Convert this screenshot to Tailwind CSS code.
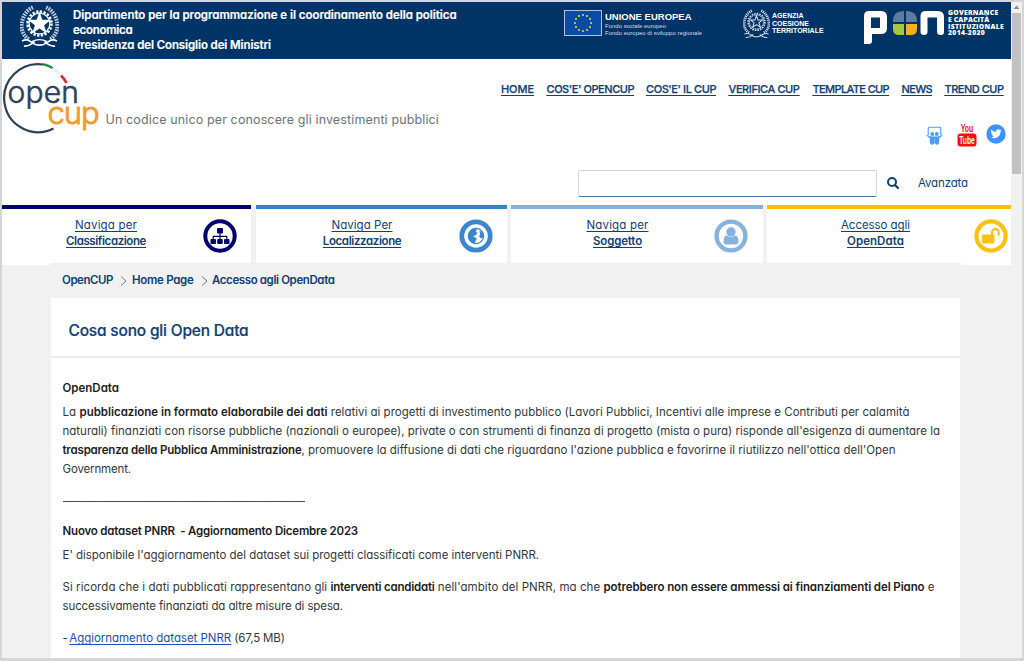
<!DOCTYPE html>
<html lang="it">
<head>
<meta charset="utf-8">
<title>OpenCUP - Accesso agli OpenData</title>
<script src="https://cdn.jsdelivr.net/npm/@tailwindcss/browser@4"></script>
</head>
<body class="flex h-[661px] w-[1024px] overflow-hidden border-t-2 border-r-2 border-b-3 border-l-2 border-[#d5d5d5] bg-white font-['Inter','Open_Sans',sans-serif] text-[11.500px] whitespace-nowrap text-[#0f3f75] [font-feature-settings:'cv11']">

<svg class="absolute size-0" aria-hidden="true">
  <defs>
    <symbol id="emblem" viewBox="0 0 40 44">
      <g fill="none" stroke="currentColor">
        <circle cx="20" cy="19" r="12.3" stroke-width="2.6" stroke-dasharray="2.4 1.46"/>
        <circle cx="20" cy="19" r="10.6" stroke-width="1.1"/>
        <path d="M9 35C2 31 0 22 3 14C5 8 9 4 14 2" stroke-width="4.2" stroke-dasharray="1.7 1" opacity=".75"/>
        <path d="M31 35C38 31 40 22 37 14C35 8 31 4 26 2" stroke-width="4.2" stroke-dasharray="1.7 1" opacity=".75"/>
        <path d="M2 37C7 34 10 37 13 39C18 42 22 42 27 39C30 37 33 34 38 37M4 42C9 43 12 40 15 37.5M36 42C31 43 28 40 25 37.5" stroke-width="1.6"/>
        <path d="M12 37.500Q20 33.500 28 37.500" stroke-width="1.4"/>
      </g>
      <path fill="currentColor" d="M20 6.500L22.900 15.200L32 15.200L24.700 20.600L27.500 29.300L20 24L12.500 29.300L15.300 20.600L8 15.200L17.100 15.200Z"/>
    </symbol>
    <symbol id="emblem-line" viewBox="0 0 40 44">
      <g fill="none" stroke="currentColor">
        <circle cx="20" cy="19" r="12.300" stroke-width="2.400" stroke-dasharray="2.400 1.460"/>
        <circle cx="20" cy="19" r="10.500" stroke-width="1"/>
        <path d="M9 35C2 31 0 22 3 14C5 8 9 4 14 2" stroke-width="4" stroke-dasharray="1.700 1.200"/>
        <path d="M31 35C38 31 40 22 37 14C35 8 31 4 26 2" stroke-width="4" stroke-dasharray="1.700 1.200"/>
        <path d="M2 37C7 34 10 37 13 39C18 42 22 42 27 39C30 37 33 34 38 37M4 42C9 43 12 40 15 37.500M36 42C31 43 28 40 25 37.500" stroke-width="1.500"/>
        <path d="M20 9.500L22.200 16L29 16L23.600 20.100L25.700 26.800L20 22.800L14.300 26.800L16.400 20.100L11 16L17.800 16Z" stroke-width="1.500"/>
      </g>
    </symbol>
  </defs>
</svg>

<div class="flex w-[1009px] flex-col">
  <header class="flex h-[57px] shrink-0 bg-[#003366] pl-[18px] text-white">
    <svg class="mt-[3px] h-[43px] w-[39px]"><use href="#emblem"/></svg>
    <div class="mt-[6px] ml-[14px] w-[490px] text-[11.500px] leading-[15px] font-semibold [-webkit-text-stroke:0.200px]">
      <p class="tracking-[-0.030px]">Dipartimento per la programmazione e il coordinamento della politica</p>
      <p class="tracking-[-0.260px]">economica</p>
      <p class="tracking-[-0.100px]">Presidenza del Consiglio dei Ministri</p>
    </div>
    <div class="mt-[8px] ml-[1px] flex w-[179px] font-['Liberation_Sans',sans-serif]">
      <svg class="h-[26px] w-[38px]" viewBox="0 0 38 26">
        <rect x=".5" y=".5" width="37" height="25" fill="#0a4ba3" stroke="#a9c3e6"/>
        <g fill="#e5e04a">
          <circle cx="19" cy="5" r="1"/><circle cx="23" cy="6.100" r="1"/><circle cx="26" cy="9" r="1"/><circle cx="27" cy="13" r="1"/><circle cx="26" cy="17" r="1"/><circle cx="23" cy="19.900" r="1"/><circle cx="19" cy="21" r="1"/><circle cx="15" cy="19.900" r="1"/><circle cx="12" cy="17" r="1"/><circle cx="11" cy="13" r="1"/><circle cx="12" cy="9" r="1"/><circle cx="15" cy="6.100" r="1"/>
        </g>
      </svg>
      <div class="ml-[3px]">
        <p class="mt-[1px] text-[9.500px] leading-[12px] font-bold">UNIONE EUROPEA</p>
        <p class="text-[6px] leading-[7px] text-[#d5deea]">Fondo sociale europeo</p>
        <p class="text-[6px] leading-[7px] text-[#d5deea]">Fondo europeo di sviluppo regionale</p>
      </div>
    </div>
    <svg class="mt-[7px] h-[30px] w-[27px] text-[#d5deea]"><use href="#emblem-line"/></svg>
    <div class="mt-[10px] ml-[2px] w-[91px] font-['Liberation_Sans',sans-serif] text-[7px] leading-[7.500px] font-bold">
      <p>AGENZIA</p><p>COESIONE</p><p>TERRITORIALE</p>
    </div>
    <svg class="mt-[8px] h-[35px] w-[83px]" viewBox="0 0 83 35">
      <path d="M1 34V6Q1 1 6 1H18Q24 1 24 7V18Q24 24 18 24H9V31Q9 34 6 34ZM8 7.500V18H17V7.500Z" fill="#fff" fill-rule="evenodd"/>
      <path d="M30 11Q30 1 40 1H41V12H30Z" fill="#5b7c9f"/>
      <path d="M43 1H44Q54 1 54 11V12H43Z" fill="#5b7c9f"/>
      <path d="M30 14H41V25H36Q30 25 30 19Z" fill="#a3c93a"/>
      <path d="M43 14H54V19Q54 25 48 25H43Z" fill="#f9b01e"/>
      <path d="M57.500 22V6Q57.500 1 62.500 1H75Q81 1 81 7V22Q81 25 78 25Q74 25 74 22V7.500H64.500V22Q64.500 25 61 25Q57.500 25 57.500 22Z" fill="#fff"/>
    </svg>
    <div class="mt-[8px] ml-[2px] font-['Open_Sans',sans-serif] text-[6.800px] leading-[6.800px] font-extrabold">
      <p class="tracking-[0.250px]">GOVERNANCE</p><p class="tracking-[0.150px]">E CAPACITÀ</p><p class="tracking-[0.300px]">ISTITUZIONALE</p><p class="tracking-[0.350px]">2014-2020</p>
    </div>
  </header>

  <section class="flex h-[146px] shrink-0 justify-between">
    <div class="flex">
      <svg class="h-[80px] w-[100px]" viewBox="2 59 100 80">
        <g fill="none" stroke-width="2.200">
          <path d="M43 64.500A34 34 0 1 0 53.500 128.500" stroke="#2d405a"/>
          <path d="M43 64.300Q48 65.300 52.500 68" stroke="#17924a" stroke-width="2.600"/>
          <path d="M53 68.500Q57.500 71 60.500 75" stroke="#ececec"/>
          <path d="M61 75.500Q64.500 79 66.500 83" stroke="#dc2430" stroke-width="2.600"/>
        </g>
        <text x="7.500" y="103" fill="#2d405a" stroke="#2d405a" stroke-width=".6" class="text-[30px] font-light tracking-[0.200px]">open</text>
        <text x="47.500" y="124" fill="#f49a26" stroke="#f49a26" stroke-width=".9" class="text-[31px] font-light tracking-[-1.100px]">cup</text>
      </svg>
      <p class="mt-[52px] ml-[3.500px] text-[12.500px] leading-[18px] tracking-[0.127px] text-[#6a737d]">Un codice unico per conoscere gli investimenti pubblici</p>
    </div>
    <div class="flex w-[510px] flex-col">
      <nav class="mt-[21px] flex h-[18px] text-[11px] leading-[18px] font-medium underline underline-offset-2 [-webkit-text-stroke:0.250px]">
        <a class="w-[45.500px] tracking-[-0.070px]">HOME</a>
        <a class="w-[99.500px] tracking-[-0.440px]">COS'E' OPENCUP</a>
        <a class="w-[82.500px] tracking-[-0.420px]">COS'E' IL CUP</a>
        <a class="w-[84px] tracking-[-0.410px]">VERIFICA CUP</a>
        <a class="w-[89px] tracking-[-0.620px]">TEMPLATE CUP</a>
        <a class="w-[43px] tracking-[-0.650px]">NEWS</a>
        <a class="tracking-[-0.490px]">TREND CUP</a>
      </nav>
      <div class="mt-[25px] flex h-[24px] pl-[425px]">
        <svg class="mt-[3px] h-[20px] w-[17px]" viewBox="0 0 17 20">
          <path d="M2.200 9V2.500Q2.200 1.200 3.500 1.200H13.500Q14.800 1.200 14.800 2.500V9" fill="none" stroke="#4a9cf5" stroke-width="1.100"/>
          <path d="M.5 9Q2 11.500 4 11.800V16Q4 18.500 6.200 18.500Q8.200 18.500 8.200 16.500V13H8.800V16.500Q8.800 18.500 10.800 18.500Q13 18.500 13 16V11.800Q15 11.500 16.500 9Q14 10.500 11 10.700H6Q3 10.500 .5 9Z" fill="#4a9cf5" stroke="#4a9cf5" stroke-width=".5"/>
          <circle cx="6.300" cy="8" r="1.900" fill="#4a9cf5"/><circle cx="10.800" cy="8" r="1.900" fill="#4a9cf5"/>
        </svg>
        <svg class="ml-[14px] h-[24px] w-[20px]" viewBox="0 0 20 24">
          <rect x=".5" y="10.500" width="19" height="13" rx="3" fill="#fb0d0d"/>
          <text x="10" y="9" fill="#fb0d0d" text-anchor="middle" textLength="12.500" lengthAdjust="spacingAndGlyphs" class="font-['Liberation_Sans',sans-serif] text-[11.500px] font-bold">You</text>
          <text x="10" y="21" fill="#fff" text-anchor="middle" textLength="15.500" lengthAdjust="spacingAndGlyphs" class="font-['Liberation_Sans',sans-serif] text-[11px] font-bold">Tube</text>
        </svg>
        <svg class="mt-[1px] ml-[9px] size-[20px]" viewBox="0 0 20 20">
          <circle cx="10" cy="10" r="9.700" fill="#3b94fa"/>
          <path fill="#fff" d="M15.600 6.300a4.500 4.500 0 0 1-1.300.4 2.200 2.200 0 0 0 1-1.300 4.500 4.500 0 0 1-1.400.5 2.300 2.300 0 0 0-3.900 2.100A6.500 6.500 0 0 1 5.300 5.600a2.300 2.300 0 0 0 .7 3 2.200 2.200 0 0 1-1-.3 2.300 2.300 0 0 0 1.800 2.300 2.300 2.300 0 0 1-1 0 2.300 2.300 0 0 0 2.100 1.600 4.600 4.600 0 0 1-3.400.9 6.500 6.500 0 0 0 10-5.700 4.600 4.600 0 0 0 1.100-1.100z"/>
        </svg>
      </div>
      <div class="mt-[23px] flex h-[27px] items-center pl-[77px]">
        <input class="h-[27px] w-[299px] rounded-[2px] border border-b-[1.500px] border-[#d3d7dc] border-b-[#44739f] bg-white" aria-label="Cerca">
        <svg class="-mt-[2px] ml-[9.500px] size-[12px]" viewBox="0 0 12 12"><circle cx="5" cy="5" r="4" fill="none" stroke="#0f3f75" stroke-width="2"/><path d="M8 8L11 11" stroke="#0f3f75" stroke-width="2.200" stroke-linecap="round"/></svg>
        <a class="mt-[1px] ml-[19.500px] tracking-[-0.145px]">Avanzata</a>
      </div>
    </div>
  </section>

  <main class="flex flex-1 flex-col bg-[#f1f1f1]">
    <nav class="flex h-[58px] shrink-0 gap-[4.500px] text-center leading-[16px]">
      <a class="flex w-[249px] border-t-4 border-[#000070] bg-white">
        <span class="mt-[8px] w-[208px] underline underline-offset-2"><span class="tracking-[0.164px]">Naviga per</span><br><b class="font-semibold tracking-[-0.406px]">Classificazione</b></span>
        <svg class="mt-[10px] -ml-[7px] size-[34px]" viewBox="0 0 34 34">
          <circle cx="17" cy="17" r="14.700" fill="none" stroke="#000070" stroke-width="4"/>
          <g fill="#000070"><rect x="14" y="9" width="6" height="5.500" rx="1"/><rect x="7.500" y="20" width="5.500" height="5" rx="1"/><rect x="14.200" y="20" width="5.500" height="5" rx="1"/><rect x="21" y="20" width="5.500" height="5" rx="1"/></g>
          <path d="M17 14V20M10.200 20.500V17.300H23.800V20.500" fill="none" stroke="#000070" stroke-width="1.200"/>
        </svg>
      </a>
      <a class="flex w-[251px] border-t-4 border-[#3485cb] bg-white">
        <span class="mt-[8px] w-[213px] underline underline-offset-2"><span class="tracking-[0.039px]">Naviga Per</span><br><b class="font-semibold tracking-[-0.375px]">Localizzazione</b></span>
        <svg class="mt-[10px] -ml-[10px] size-[34px]" viewBox="0 0 34 34">
          <circle cx="17" cy="17" r="14.200" fill="none" stroke="#3b87ce" stroke-width="4.800"/>
          <circle cx="17" cy="17" r="7.600" fill="#fff" stroke="#3b87ce" stroke-width="1.300"/>
          <path fill="#3b87ce" d="M10 14Q12 9.500 16.500 9.500L18 11L16.500 12.500L18.500 14L16.500 16.500L14 17L16 18.500L18 19.500L16.500 22L16 25Q10 23.500 9.300 18ZM20.500 12L23 12.500Q25 15 24.500 18L22 19.500L20 17.500L21 15.500Z"/>
        </svg>
      </a>
      <a class="flex w-[251.500px] border-t-4 border-[#82b1dc] bg-white">
        <span class="mt-[8px] w-[213px] underline underline-offset-2"><span class="tracking-[0.164px]">Naviga per</span><br><b class="font-semibold tracking-[-0.166px]">Soggetto</b></span>
        <svg class="mt-[10px] -ml-[10px] size-[34px]" viewBox="0 0 34 34">
          <circle cx="17" cy="17" r="14.400" fill="none" stroke="#85b3de" stroke-width="4.400"/>
          <circle cx="17" cy="13" r="4.700" fill="#85b3de"/>
          <path d="M9.500 22.500Q9.500 17 13 16.500Q17 19.500 21 16.500Q24.500 17 24.500 22.500Q24.500 25.500 21.500 25.500H12.500Q9.500 25.500 9.500 22.500Z" fill="#85b3de"/>
        </svg>
      </a>
      <a class="flex w-[244px] border-t-4 border-[#ffbf00] bg-white">
        <span class="mt-[8px] w-[217px] underline underline-offset-2"><span class="tracking-[-0.060px]">Accesso agli</span><br><b class="font-semibold tracking-[0.066px]">OpenData</b></span>
        <svg class="mt-[10px] -ml-[10px] size-[34px]" viewBox="0 0 34 34">
          <circle cx="17" cy="17" r="14.600" fill="none" stroke="#ffc010" stroke-width="4.200"/>
          <rect x="8" y="15.500" width="12.500" height="9" rx="1" fill="#ffc010"/>
          <path d="M18 16V13.500Q18 10 21.300 10Q24.700 10 24.700 13.500V16" fill="none" stroke="#ffc010" stroke-width="2" stroke-linecap="round"/>
        </svg>
      </a>
    </nav>
    <div class="flex h-[35px] shrink-0 justify-between">
      <i class="h-[2px] w-[48px] bg-white"></i>
      <div class="mt-[1px] ml-[12px] flex flex-1 items-center font-semibold">
        <a class="w-[58px] tracking-[-0.460px]">OpenCUP</a>
        <svg class="mr-[5px] h-[10px] w-[7px]" viewBox="0 0 7 10" fill="none" stroke="#737a82"><path d="M1 .5L6 5L1 9.500"/></svg>
        <a class="w-[69px] tracking-[-0.293px]">Home Page</a>
        <svg class="mr-[4px] h-[10px] w-[7px]" viewBox="0 0 7 10" fill="none" stroke="#737a82"><path d="M1 .5L6 5L1 9.500"/></svg>
        <a class="tracking-[-0.389px]">Accesso agli OpenData</a>
      </div>
      <i class="h-[2px] w-[50px] bg-white"></i>
    </div>
    <article class="ml-[49px] w-[909px] flex-1 bg-white text-[11.500px] leading-[19.300px] text-[#33373b]">
      <h1 class="h-[60px] border-b-2 border-[#ebebeb] pt-[23px] pl-[17.500px] text-[15.500px] leading-[20px] font-medium tracking-[-0.190px] text-[#0f3f75] [-webkit-text-stroke:0.200px]">Cosa sono gli Open Data</h1>
      <div class="pt-[20.800px] pl-[11.500px] [&_b]:font-semibold [&_b]:text-[#1b1e21]">
        <p><b>OpenData</b></p>
        <p class="mt-[4.500px]"><span class="tracking-[0.073px]">La </span><b class="tracking-[-0.017px]">pubblicazione in formato elaborabile dei dati</b><span class="tracking-[0.008px]"> relativi ai progetti di investimento pubblico (Lavori Pubblici, Incentivi alle imprese e Contributi per calamità</span><br><span class="tracking-[-0.005px]">naturali) finanziati con risorse pubbliche (nazionali o europee), private o con strumenti di finanza di progetto (mista o pura) risponde all'esigenza di aumentare la</span><br><b class="tracking-[-0.185px]">trasparenza della Pubblica Amministrazione</b><span class="tracking-[0.003px]">, promuovere la diffusione di dati che riguardano l'azione pubblica e favorirne il riutilizzo nell'ottica dell'Open</span><br><span class="tracking-[-0.151px]">Government.</span></p>
        <p class="mt-[6px] w-[242px] overflow-hidden font-['Liberation_Sans',sans-serif] text-[12px]">______________________________________________</p>
        <p class="mt-[16.700px]"><b class="tracking-[-0.191px]">Nuovo dataset PNRR &nbsp;- Aggiornamento Dicembre 2023</b></p>
        <p class="mt-[4.500px] tracking-[-0.036px]">E' disponibile l'aggiornamento del dataset sui progetti classificati come interventi PNRR.</p>
        <p class="mt-[13px]"><span class="tracking-[0.062px]">Si ricorda che i dati pubblicati rappresentano gli </span><b class="tracking-[-0.220px]">interventi candidati</b><span class="tracking-[0.064px]"> nell'ambito del PNRR, ma che </span><b class="tracking-[-0.097px]">potrebbero non essere ammessi ai finanziamenti del Piano</b> e<br><span class="tracking-[-0.105px]">successivamente finanziati da altre misure di spesa.</span></p>
        <p class="mt-[12.800px]"><span class="tracking-[-0.900px]">- </span><a class="tracking-[-0.030px] text-[#1a4fb5] underline underline-offset-2">Aggiornamento dataset PNRR</a><span class="tracking-[-0.160px]"> (67,5 MB)</span></p>
      </div>
    </article>
  </main>
</div>

<aside class="flex w-[11px] flex-col items-center bg-[#f1f1f1]">
  <svg class="h-[11px] w-[9px]" viewBox="0 0 9 11"><path d="M1.500 7L4.500 3.500L7.500 7Z" fill="#8b8b8b"/></svg>
  <i class="h-[161px] w-[9px] bg-[#c1c1c1]"></i>
</aside>
</body>
</html>
